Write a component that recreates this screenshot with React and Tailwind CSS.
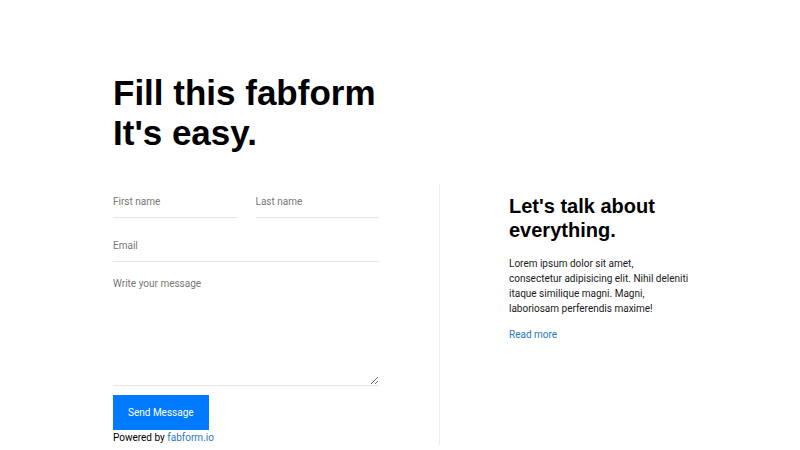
import React from "react";

const ContactForm = () => {
  return (
    <form className="w-[266px]" onSubmit={(e) => e.preventDefault()}>
      <div className="flex gap-[19px]">
        <input
          type="text"
          placeholder="First name"
          className="w-full h-[34px] pt-[11px] pb-[10px] leading-[12px] text-[10px] border-b border-[#e6e6e6] outline-none placeholder:text-[#777]"
        />
        <input
          type="text"
          placeholder="Last name"
          className="w-full h-[34px] pt-[11px] pb-[10px] leading-[12px] text-[10px] border-b border-[#e6e6e6] outline-none placeholder:text-[#777]"
        />
      </div>

      <input
        type="email"
        placeholder="Email"
        className="mt-[10px] block w-full h-[34px] pt-[11px] pb-[10px] leading-[12px] text-[10px] border-b border-[#e6e6e6] outline-none placeholder:text-[#777]"
      />

      <textarea
        placeholder="Write your message"
        className="mt-[10px] block w-full h-[114px] pt-[6px] leading-[12px] text-[10px] border-b border-[#e6e6e6] outline-none placeholder:text-[#777]"
      />

      <button
        type="submit"
        className="mt-[9px] block h-[35px] px-[15px] bg-[#007bff] text-white text-[10px]"
      >
        Send Message
      </button>

      <p className="pt-[1px] text-[10px] leading-[14px] text-black">
        Powered by{" "}
        <a href="#" className="text-[#2878c8]">
          fabform.io
        </a>
      </p>
    </form>
  );
};

const App = () => {
  return (
    <div
      className="h-[450px] w-full overflow-hidden bg-white pt-[73px] pl-[113px]"
      style={{ fontFamily: "Roboto, 'Liberation Sans', sans-serif" }}
    >
      <h1 className="font-['Liberation_Sans',Arial,sans-serif] font-bold text-[35px] leading-[40px] text-black">
        Fill this fabform
        <br />
        It's easy.
      </h1>

      <div className="mt-[31px] flex items-stretch">
        <ContactForm />

        <div className="ml-[60px] border-l border-[#ececec] pl-[69px] pt-[10px] pb-[10px]">
          <h2 className="font-['Liberation_Sans',Arial,sans-serif] font-bold text-[20px] leading-[24px] text-black">
            Let's talk about
            <br />
            everything.
          </h2>
          <p className="mt-[14px] w-[179.5px] text-[10px] leading-[15px] text-[#1a1a1a]">
            Lorem ipsum dolor sit amet, consectetur adipisicing elit. Nihil
            deleniti itaque similique magni. Magni, laboriosam perferendis
            maxime!
          </p>
          <a href="#" className="mt-[11px] block text-[10px] leading-[15px] text-[#2878c8]">
            Read more
          </a>
        </div>
      </div>
    </div>
  );
};

export default App;
